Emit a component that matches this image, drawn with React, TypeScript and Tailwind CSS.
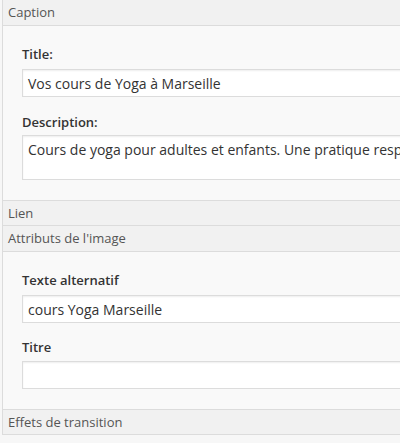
import React from 'react';

const font = { fontFamily: '"Open Sans", "Noto Sans", sans-serif' };

function SectionHeader({ title, top = false }: { title: string; top?: boolean }) {
  return (
    <div
      className={`h-[26px] bg-[#f1f1f1] border-b border-[#dcdcdc] pl-[5px] pt-[1px] flex items-center text-[13px] text-[#555] ${top ? '' : 'border-t'}`}
    >
      {title}
    </div>
  );
}

function Field({ label, value, mb, h = 28 }: { label: string; value?: string; mb: string; h?: number }) {
  return (
    <div>
      <div className={`text-[13px] leading-[18px] font-semibold text-[#333] ${mb}`}>{label}</div>
      {h > 30 ? (
        <div className="h-[45px] bg-white border border-[#dcdcdc] shadow-[inset_0_1px_2px_rgba(0,0,0,0.07)] px-[5px] pt-[4px] text-[14px] leading-[20px] text-[#333] whitespace-nowrap">
          {value}
        </div>
      ) : (
        <div className="h-[28px] bg-white border border-[#dcdcdc] shadow-[inset_0_1px_2px_rgba(0,0,0,0.07)] px-[5px] flex items-center text-[14px] text-[#333] whitespace-nowrap">
          {value}
        </div>
      )}
    </div>
  );
}

export default function App() {
  return (
    <div className="w-[400px] h-[443px] overflow-hidden bg-[#f7f7f7] pl-[2px]" style={font}>
      <div className="w-[640px] border-l border-[#dcdcdc] bg-[#f9f9f9]">
        {/* Caption */}
        <SectionHeader title="Caption" top />
        <div className="pl-[19px] pt-[19px] pb-[20px]">
          <Field label="Title:" value="Vos cours de Yoga à Marseille" mb="mb-[6px]" />
          <div className="h-[16px]" />
          <Field
            label="Description:"
            value="Cours de yoga pour adultes et enfants. Une pratique respectueuse de chacun"
            mb="mb-[4px]"
            h={45}
          />
        </div>

        <SectionHeader title="Lien" />
        <SectionHeader title="Attributs de l'image" top />

        <div className="pl-[19px] pt-[19px] pb-[20px]">
          <Field label="Texte alternatif" value="cours Yoga Marseille" mb="mb-[6px]" />
          <div className="h-[15px]" />
          <Field label="Titre" value="" mb="mb-[5px]" />
        </div>

        <SectionHeader title="Effets de transition" />
      </div>
    </div>
  );
}
